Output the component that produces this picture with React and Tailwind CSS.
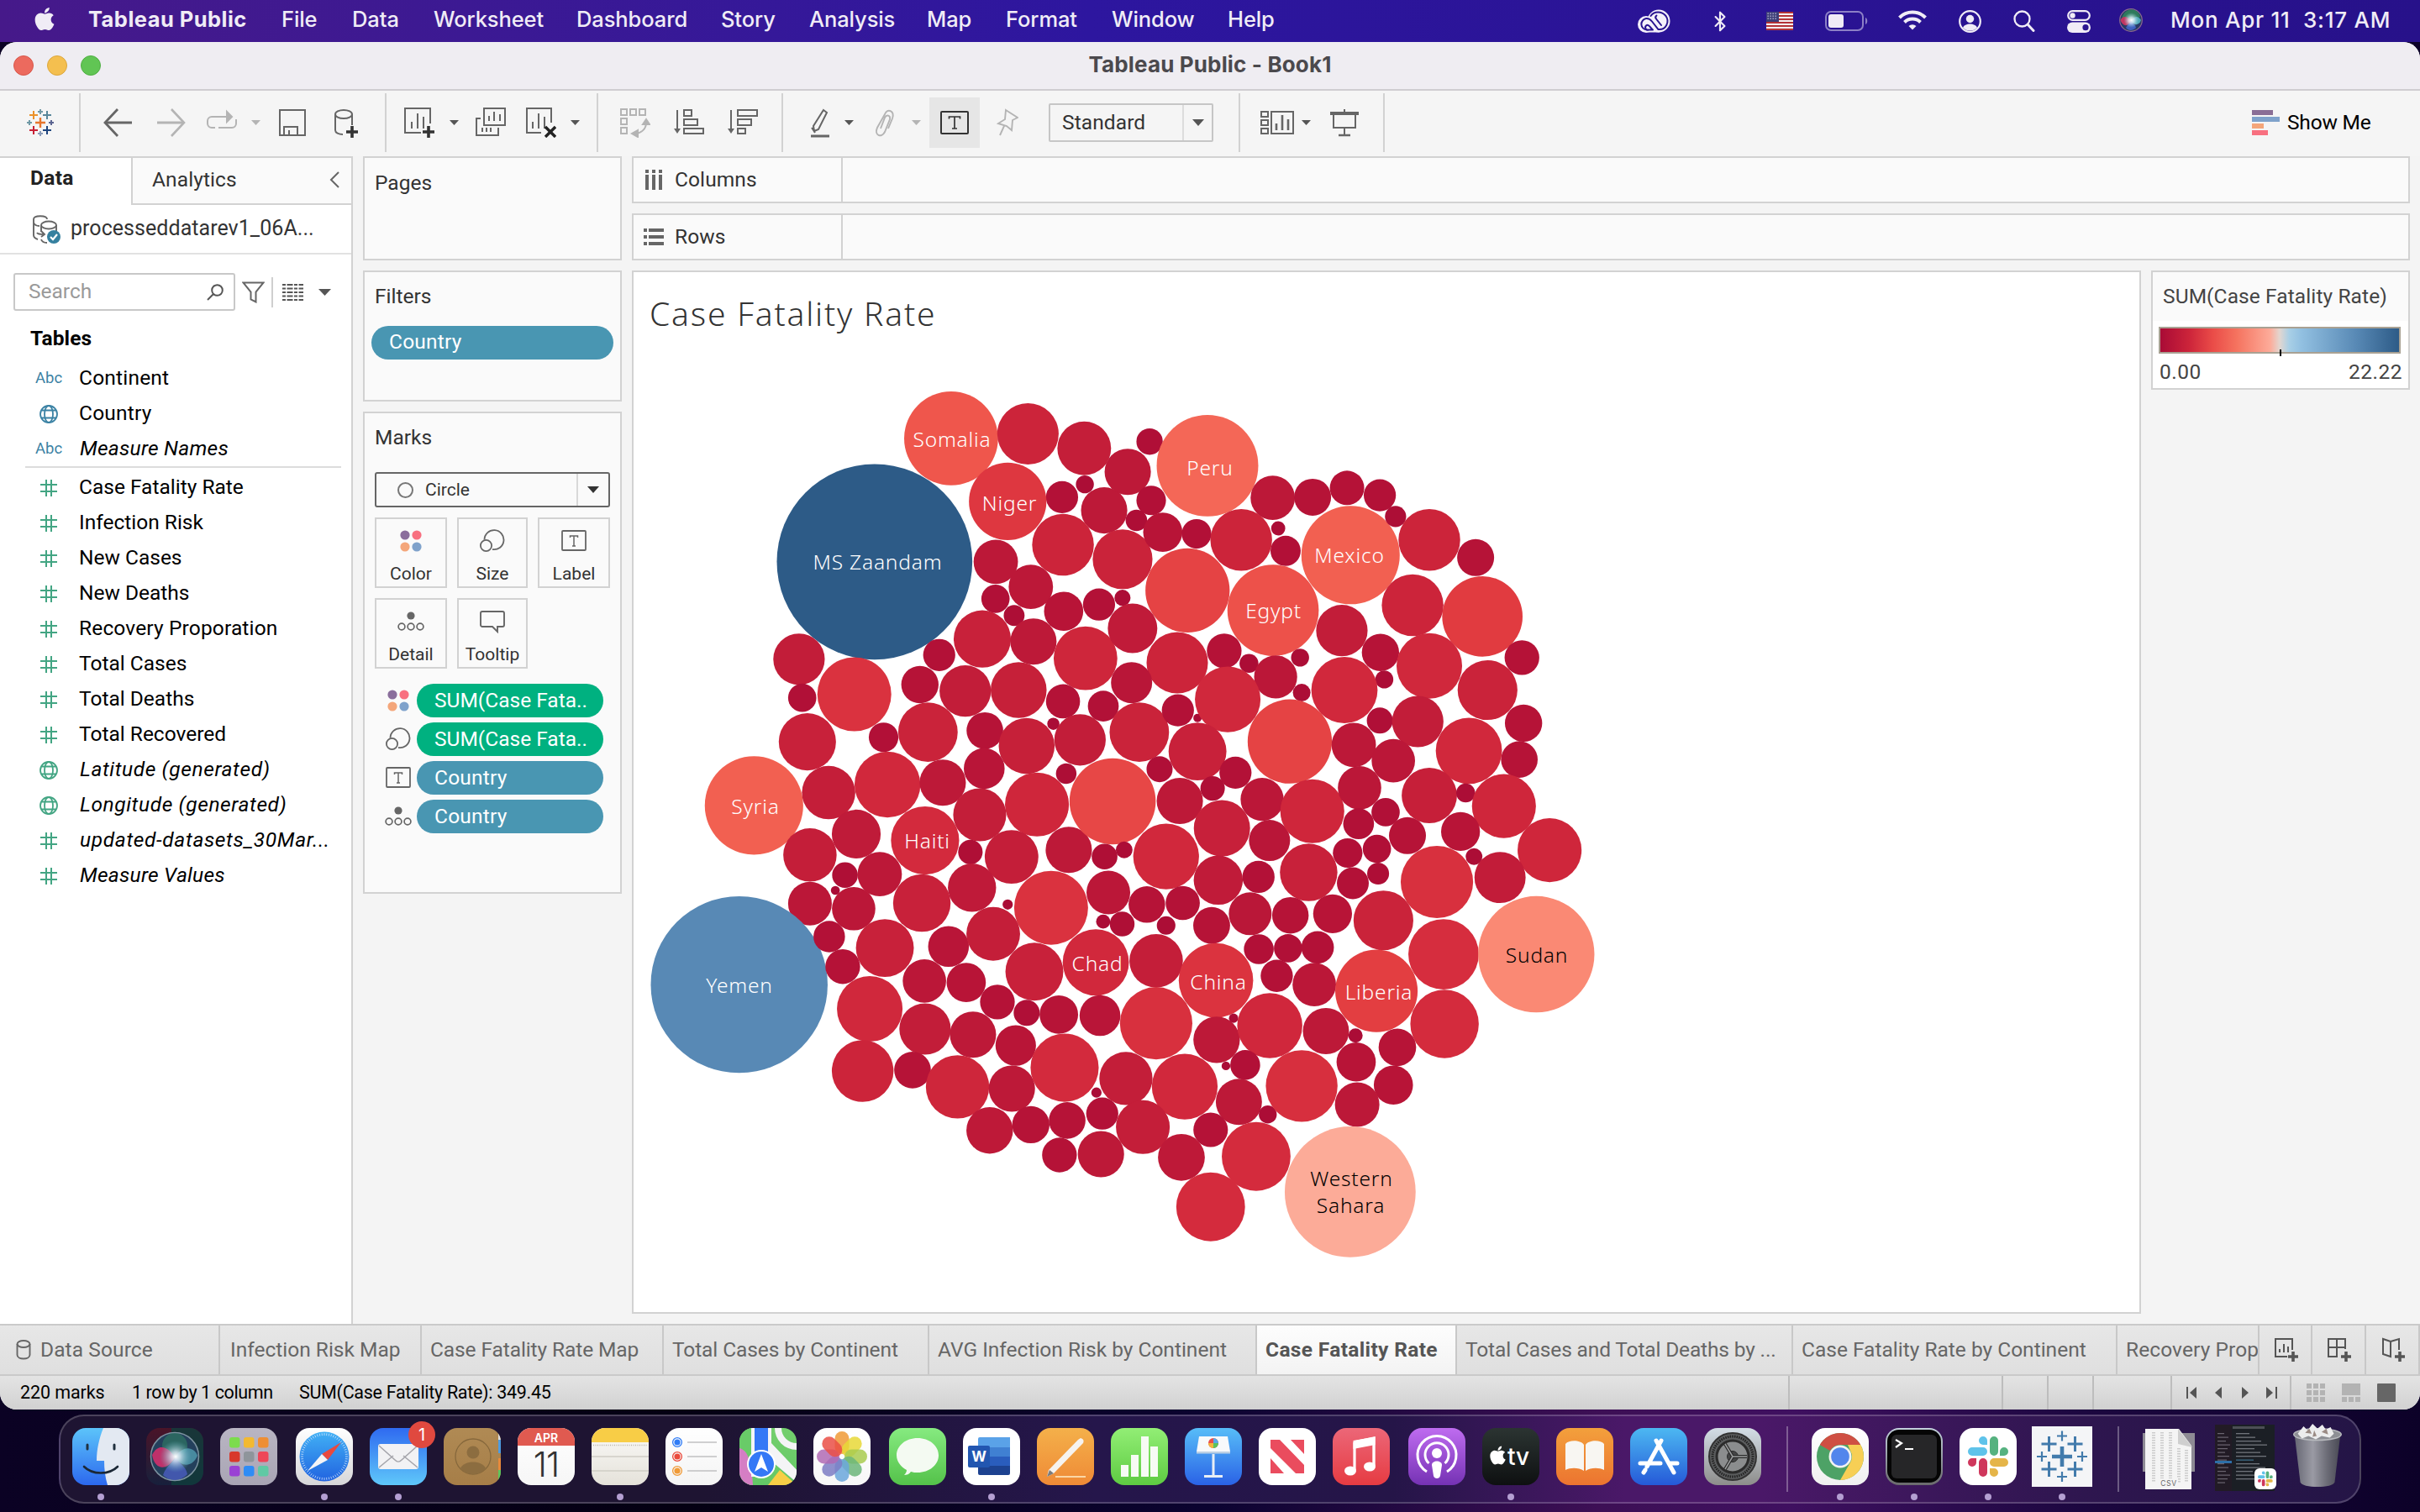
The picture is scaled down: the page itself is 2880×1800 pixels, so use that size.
import React from 'react';
import { FaApple } from 'react-icons/fa';
import { Bluetooth } from 'lucide-react';

const UI = "font-['Roboto','Liberation_Sans',sans-serif]";
const SYS = "font-['Inter','Liberation_Sans',sans-serif]";

/* ---------- bubble data: [x, y, radius] in the local units of each block ---------- */
const BLOCKS = [
  {
    ox: 750, oy: 440, sx: 2.6133, sy: 2.6133,
    marks: [
      [998, 214, 146], [1237, 200, 95.5], [1412, 245, 83.5], [1414, 357, 28], [1343, 397, 50], [1174, 410, 120.5],
      [1474, 438, 72], [760, 598, 304], [1346, 545, 96], [1137, 598, 69], [1246, 676, 69], [1136, 713, 44],
      [1348, 752, 61], [1458, 731, 50], [1531, 710, 25], [1194, 765, 32.5], [1095, 838, 89], [1254, 846, 72],
      [1416, 898, 99], [525, 901, 80], [961, 888, 50], [901, 980, 58], [697, 1010, 115], [1042, 1000, 80],
      [1208, 997, 87], [535, 1021, 44], [1346, 1032, 53], [551, 1158, 89], [788, 1144, 46], [926, 1128, 92.5],
      [1103, 1123, 57], [1316, 1102, 19], [1233, 1171, 87], [1399, 1152, 80], [1101, 1241, 63.5], [385, 1356, 153],
      [617, 1316, 83], [800, 1291, 102.5], [972, 1285, 72], [1356, 1257, 32], [1265, 1353, 99.5], [1087, 1385, 82.5],
      [703, 1445, 76], [917, 1465, 106], [559, 1510, 83], [1058, 1501, 38], [1186, 1516, 83.5], [1364, 1494, 72],
    ],
  },
  {
    ox: 1300, oy: 440, sx: 2.6133, sy: 2.6133,
    marks: [
      [110, 318, 72], [178, 224, 41], [358, 299, 158], [183, 407, 46], [137, 469, 33.5], [94, 590, 93],
      [219, 506, 61], [324, 511, 46], [463, 530, 96], [561, 399, 69], [685, 397, 57.5], [792, 368, 53.5],
      [894, 391, 50], [578, 494, 22], [601, 564, 47], [803, 577, 153], [943, 457, 33], [1048, 530, 96],
      [1192, 585, 57.5], [296, 687, 131], [562, 749, 142], [125, 805, 77], [264, 912, 95.5], [410, 875, 54],
      [487, 914, 29.5], [570, 956, 67], [646, 896, 28], [651, 1005, 27.5], [776, 812, 80], [896, 880, 58],
      [996, 733, 96], [1213, 768, 125], [1048, 922, 102], [908, 964, 28], [784, 997, 103], [1336, 896, 54],
      [1229, 997, 93], [122, 974, 64], [34, 1047, 48], [146, 1128, 92.5], [266, 1060, 50], [327, 1084, 13],
      [421, 1026, 102], [327, 1188, 90], [614, 1157, 131], [894, 1092, 40.5], [1012, 1095, 80], [1341, 1100, 58],
      [1328, 1213, 57], [1171, 1186, 103], [209, 1243, 40.5], [445, 1254, 50], [374, 1303, 38], [272, 1342, 72],
      [403, 1427, 87.5], [528, 1337, 67], [551, 1465, 64], [684, 1374, 99.5], [813, 1168, 69], [936, 1217, 67.5],
      [831, 1301, 67.5], [828, 1413, 48], [912, 1377, 44], [1048, 1325, 86], [1161, 1317, 29.5], [1280, 1358, 99.5],
      [1145, 1437, 60.5], [980, 1450, 57.5], [794, 1504, 46], [885, 1491, 44], [1187, 1515, 26], [1422, 1495, 99.5],
      [63, 1343, 134], [38, 1515, 40], [99, 1494, 26],
    ],
  },
  {
    ox: 750, oy: 980, sx: 2.6133, sy: 2.8,
    marks: [
      [668, 173, 40], [776, 170, 69], [638, 224, 14], [559, 268, 68], [695, 285, 67.5], [907, 266, 89.5],
      [1063, 215, 75], [1174, 271, 16], [1309, 282, 115], [1487, 231, 68], [1471, 328, 22], [1530, 336, 38.5],
      [339, 538, 275], [619, 378, 49], [792, 416, 90], [661, 478, 54], [990, 411, 63.5], [1129, 369, 83.5],
      [1448, 464, 103], [1257, 495, 90], [915, 526, 67.5], [1045, 531, 61], [745, 619, 102], [917, 686, 80],
      [1142, 596, 54], [1233, 632, 40.5], [1333, 638, 60], [1461, 641, 63.5], [1066, 705, 72], [1199, 741, 63],
      [723, 826, 96], [878, 823, 57], [1018, 879, 98.5], [1187, 885, 72], [1351, 815, 106], [1450, 898, 16],
      [1468, 968, 50], [1118, 1024, 72.5], [1246, 1005, 58], [1359, 991, 57], [1335, 1106, 54], [1464, 1103, 72],
    ],
  },
  {
    ox: 1300, oy: 980, sx: 2.529, sy: 2.8,
    marks: [
      [222, 111, 99], [379, 190, 74], [500, 179, 48.5], [651, 164, 86.5], [164, 271, 55], [272, 266, 51.5],
      [222, 341, 28], [359, 341, 55.5], [475, 302, 64.5], [596, 307, 55], [723, 302, 58.5], [784, 200, 48],
      [860, 168, 33], [1037, 196, 109], [1227, 181, 77], [876, 324, 90], [1057, 437, 106], [1336, 437, 175],
      [192, 459, 80.5], [372, 524, 112], [501, 420, 45], [589, 417, 42.5], [678, 414, 49], [555, 509, 48.5],
      [668, 538, 65.5], [855, 559, 124], [1060, 669, 103], [192, 667, 109], [374, 722, 70], [425, 650, 14],
      [534, 675, 98], [703, 693, 69.5], [792, 708, 21.5], [794, 796, 59], [918, 747, 56.5], [906, 873, 59],
      [797, 938, 67], [402, 809, 13], [460, 806, 45], [101, 851, 80], [278, 878, 99], [441, 929, 69.5],
      [528, 971, 27], [630, 876, 108], [152, 1013, 81], [356, 1022, 52], [268, 1114, 70.5], [493, 1111, 103.5],
      [356, 1279, 103.5], [776, 1229, 197],
    ],
  },
];

const STOPS = [
  [0, 169, 11, 54], [0.035, 182, 19, 55], [0.067, 193, 28, 57], [0.0985, 204, 36, 58], [0.121, 211, 42, 61],
  [0.143, 218, 50, 63], [0.178, 227, 62, 65], [0.19, 230, 69, 69], [0.229, 239, 85, 76], [0.253, 242, 96, 81],
  [0.268, 244, 102, 86], [0.352, 250, 136, 115], [0.45, 252, 171, 153], [0.5, 226, 214, 208], [0.56, 146, 192, 225],
  [0.82, 88, 137, 181], [1, 45, 91, 135],
];

function tone(t) {
  for (let i = 1; i < STOPS.length; i += 1) {
    if (t <= STOPS[i][0] || i === STOPS.length - 1) {
      const a = STOPS[i - 1];
      const b = STOPS[i];
      const k = Math.min(1, (t - a[0]) / (b[0] - a[0]));
      return `rgb(${[1, 2, 3].map((c) => Math.round(a[c] + (b[c] - a[c]) * k)).join(',')})`;
    }
  }
  return 'rgb(169,11,54)';
}

const BUBBLES = BLOCKS.flatMap((b) =>
  b.marks.map(([x, y, r]) => {
    const radius = r / b.sx;
    return { x: b.ox + x / b.sx, y: b.oy + y / b.sy, r: radius, fill: tone((radius / 116.3) ** 2) };
  })
);

const LABELS = [
  ['Somalia', 1133, 532], ['Niger', 1201.5, 607.6], ['MS Zaandam', 1044.5, 678], ['Syria', 899, 968.5],
  ['Haiti', 1103.5, 1010], ['Peru', 1440, 566], ['Mexico', 1606, 670], ['Egypt', 1515.5, 736],
  ['Yemen', 880, 1182], ['Chad', 1306, 1156], ['China', 1450, 1178], ['Liberia', 1641, 1190],
  ['Sudan', 1829, 1146, true], ['Western', 1608.5, 1412, true], ['Sahara', 1607.5, 1444, true],
];

/* ---------- menu bar ---------- */
const MENUS = [
  ['File', 'w-[84px]'], ['Data', 'w-[97px]'], ['Worksheet', 'w-[170px]'], ['Dashboard', 'w-[172px]'],
  ['Story', 'w-[105px]'], ['Analysis', 'w-[140px]'], ['Map', 'w-[94px]'], ['Format', 'w-[126px]'],
  ['Window', 'w-[138px]'], ['Help', 'w-[80px]'],
];

function MenuBar() {
  return (
    <div className={`flex h-[50px] shrink-0 items-center bg-linear-to-r from-[#46198a] via-[#2d169f] via-45% to-[#27118a] text-[25.5px] font-medium tracking-[-0.1px] text-[#f0ecf6] ${SYS}`}>
      <FaApple className="mb-[5px] ml-[38px] h-[31px] w-[30px]" />
      <div className="mb-[3px] ml-[37px] w-[230px] font-bold tracking-[0.45px] whitespace-nowrap">Tableau Public</div>
      {MENUS.map(([m, w]) => (
        <div key={m} className={`mb-[3px] whitespace-nowrap ${w}`}>{m}</div>
      ))}
      <svg className="ml-auto h-[28px] w-[40px]" viewBox="0 0 40 28">
        <g fill="#f4f0fa"><circle cx="11" cy="18" r="10" /><circle cx="26" cy="14" r="13.500" /><path d="M11 18h16v9.500H11z" /></g>
        <g fill="none" stroke="#28138f" strokeWidth="2" strokeLinecap="round">
          <path d="M12 24.500a6.800 6.800 0 0 1-1-13.500c3-.5 5 1 7 3.500l7.500 9.500c9 1 14-9 9-16-5-6-14-6-18 0" />
          <path d="M19 24.500h-5a3 3 0 0 1-3-5c1.500-1.200 3-.6 4.200.9l3.600 4.100" />
          <path d="m29 19-6-7.500c-1-1.200-.8-3 .4-4" />
        </g>
      </svg>
      <Bluetooth className="ml-[46px] h-[29px] w-[26px]" strokeWidth={2} />
      <svg className="ml-[42px] h-[22px] w-[32px]" viewBox="0 0 32 22">
        <rect width="32" height="22" fill="#f3eef0" />
        {[0, 2, 4, 6, 8, 10].map((i) => <rect key={i} y={i * 2} width="32" height="1.9" fill="#b02a2e" />)}
        <rect width="15" height="12" fill="#3d3f78" />
        {[1.5, 4.5, 7.5].map((y) => [1.5, 4.5, 7.5, 10.5].map((x) => <rect key={`${x}-${y}`} x={x} y={y} width="1.3" height="1.3" fill="#cfcbe4" />))}
      </svg>
      <svg className="ml-[38px] h-[24px] w-[52px]" viewBox="0 0 52 24">
        <rect x="1" y="1" width="44" height="22" rx="6" fill="none" stroke="#8c80c6" strokeWidth="2" />
        <rect x="4" y="4" width="18" height="16" rx="3" fill="#f0ecf6" />
        <path d="M48 8c3 1 3 7 0 8z" fill="#8c80c6" />
      </svg>
      <svg className="mb-[3px] ml-[35px] h-[24px] w-[34px]" viewBox="0 0 34 24" fill="none" stroke="#f0ecf6" strokeWidth="4">
        <path d="M1.500 9a22 22 0 0 1 31 0" />
        <path d="M7.500 14.500a13.500 13.500 0 0 1 19 0" />
        <path d="M12.500 19a6.500 6.500 0 0 1 9 0L17 23.500z" fill="#f0ecf6" stroke="none" />
      </svg>
      <svg className="ml-[38px] h-[27px] w-[27px]" viewBox="0 0 27 27">
        <circle cx="13.500" cy="13.500" r="12.300" fill="none" stroke="#f0ecf6" strokeWidth="2.200" />
        <circle cx="13.500" cy="10.500" r="4.700" fill="#f0ecf6" />
        <path d="M5 21c2-6 15-6 17 0a12 12 0 0 1-17 0" fill="#f0ecf6" />
      </svg>
      <svg className="ml-[38px] h-[26px] w-[26px]" viewBox="0 0 26 26" fill="none" stroke="#f0ecf6" strokeLinecap="round">
        <circle cx="10.500" cy="10.500" r="9" strokeWidth="2.300" />
        <path d="m17.500 17.500 6.500 7" strokeWidth="3" />
      </svg>
      <svg className="ml-[38px] h-[27px] w-[28px]" viewBox="0 0 28 27">
        <rect x="1.200" y="1.200" width="25.600" height="10.600" rx="5.300" fill="none" stroke="#f0ecf6" strokeWidth="2.200" />
        <circle cx="6.500" cy="6.500" r="3.200" fill="#f0ecf6" />
        <rect y="14.500" width="28" height="12.500" rx="6.250" fill="#f0ecf6" />
        <circle cx="22" cy="20.700" r="3.600" fill="#2b1690" />
      </svg>
      <svg className="mb-[2px] ml-[34px] h-[28px] w-[28px]" viewBox="0 0 28 28">
        <radialGradient id="ms"><stop offset="0" stopColor="#fff" /><stop offset=".4" stopColor="#e3f2fa" stopOpacity=".75" /><stop offset="1" stopColor="#8fd0d8" stopOpacity="0" /></radialGradient>
        <circle cx="14" cy="14" r="13.300" fill="#273a66" stroke="#8d6a8f" strokeWidth="1.200" />
        <path d="M3 12C5 4 10 1.500 15 1.500S24 5 25 10c-6 6-16 6-22 2z" fill="#2f7a5c" />
        <path d="M1.500 14C4 8 10 9 14 15c-3 7-10 7-12.500-1z" fill="#c23560" /><path d="M14 15c4-7 9-6 12-1-2 6-8 7-12 1z" fill="#4fa8b8" />
        <path d="M8 23c2-4 5-5 6-8 2 3 5 4 6 8-4 4-9 4-12 0z" fill="#3f60c0" />
        <circle cx="14.500" cy="14" r="9" fill="url(#ms)" />
      </svg>
      <div className="mr-[39px] mb-[3px] ml-[33px] w-[258px] text-[26px] tracking-[0.75px] whitespace-pre">Mon Apr 11&nbsp; 3:17 AM</div>
    </div>
  );
}

/* ---------- toolbar ---------- */
const D = '#666666';
const L = '#b4b4b4';

function Ico({ w, cls, children, color = D }) {
  return (
    <svg className={`h-[36px] shrink-0 ${cls}`} viewBox={`0 0 ${w} 36`} fill="none" stroke={color} strokeWidth="2">
      {children}
    </svg>
  );
}
const Sep = ({ cls }) => <div className={`h-[70px] w-[2px] shrink-0 bg-[#d2d2d2] ${cls}`} />;
const Caret = ({ cls, color = '#555' }) => (
  <svg className={`h-[6px] w-[11px] shrink-0 ${cls}`} viewBox="0 0 11 6"><path d="M0 0h11l-5.500 6z" fill={color} /></svg>
);

function plus(cx, cy, s) {
  return `M${cx - s} ${cy}h${2 * s}M${cx} ${cy - s}v${2 * s}`;
}

function Toolbar() {
  return (
    <div className="flex h-[78px] shrink-0 items-center bg-[#f5f5f5] pb-[2px]">
      <Ico w={32} cls="ml-[32px] w-[32px]">
        <path d={plus(16, 18, 6)} stroke="#e8762d" strokeWidth="2.400" />
        <path d={plus(8, 9, 5)} stroke="#eb9129" />
        <path d={plus(24, 9, 5)} stroke="#59879b" />
        <path d={plus(8, 27, 5)} stroke="#c72035" />
        <path d={plus(24, 27, 5)} stroke="#1f457e" />
        <path d={plus(16, 5, 3)} stroke="#7199a6" />
        <path d={plus(16, 31, 3)} stroke="#8a9bb8" />
        <path d={plus(3, 18, 3)} stroke="#7099a6" />
        <path d={plus(29, 18, 3)} stroke="#5b6591" />
      </Ico>
      <Sep cls="ml-[30px]" />
      <Ico w={34} cls="ml-[27px] w-[34px]"><path d="M17 2 2 18l15 16" strokeWidth="2.800" /><path d="M2 18h32" strokeWidth="3.200" /></Ico>
      <Ico w={34} cls="ml-[30px] w-[34px]" color={L}><path d="M17 2l15 16-15 16" strokeWidth="2.600" /><path d="M0 18h32" strokeWidth="3" /></Ico>
      <Ico w={36} cls="ml-[25px] w-[36px]" color={L}>
        <path d="M10 24H6a5 5 0 0 1-5-5v-3a5 5 0 0 1 5-5h18M14 24h16a5 5 0 0 0 5-5v-5" />
        <path d="M24 5v12l6-6z" fill={L} />
      </Ico>
      <Caret cls="ml-[17px]" color={L} />
      <Ico w={32} cls="ml-[22px] w-[32px]"><path d="M1 3h30v30H1zM6 33V23h16v10M12 33v-6" /></Ico>
      <Ico w={28} cls="ml-[34px] w-[28px]">
        <ellipse cx="11" cy="8" rx="10" ry="5" /><path d="M1 8v19c0 3 4 5 9 5M21 8v13" />
        <path d={plus(21, 29, 7)} stroke="#333" strokeWidth="3.600" />
      </Ico>
      <Sep cls="ml-[32px]" />
      <Ico w={36} cls="ml-[21px] w-[36px]">
        <path d="M20 30H1V1h30v18M9 25v-8M16 25V7M23 25V11" /><path d={plus(29, 29, 7)} stroke="#333" strokeWidth="3.600" />
      </Ico>
      <Caret cls="ml-[18px]" />
      <Ico w={36} cls="ml-[20px] w-[36px]">
        <path d="M10 1h25v20H10zM16 16v-6M22 16V5M29 16V8M6 13H1v20h26v-9M8 29v-5M13 29v-5M18 29v-5" />
      </Ico>
      <Ico w={36} cls="ml-[24px] w-[36px]">
        <path d="M18 30H1V1h29v17M8 25v-8M15 25V7M22 25V11" /><path d="m23 23 12 12M35 23 23 35" stroke="#222" strokeWidth="3.400" />
      </Ico>
      <Caret cls="ml-[17px]" />
      <Sep cls="ml-[20px]" />
      <Ico w={36} cls="ml-[26px] w-[36px]" color={L}>
        <path d="M1 2h7v7H1zM12 2h7v7h-7zM23 2h7v7h-7zM1 13h7v7H1zM1 24h7v7H1zM31 18c0 8-6 12-12 13" />
        <path d="m27 20 4-6 4 6zM21 27l-7 4 7 4z" fill={L} />
      </Ico>
      <Ico w={36} cls="ml-[28px] w-[36px]">
        <path d="M4 3v24M12 3h9v7h-9zM12 14h16v7H12zM12 25h23v6H12z" /><path d="M0 25h8l-4 6z" fill={D} stroke="none" />
      </Ico>
      <Ico w={36} cls="ml-[28px] w-[36px]">
        <path d="M4 3v24M12 3h23v7H12zM12 14h16v7H12zM12 25h9v6h-9z" /><path d="M0 25h8l-4 6z" fill={D} stroke="none" />
      </Ico>
      <Sep cls="ml-[28px]" />
      <Ico w={22} cls="ml-[33px] w-[22px]">
        <path d="m15 3 4 3L9 26l-5 2-1-6zM1 24l4 6" /><path d="M0 34h22" strokeWidth="3" />
      </Ico>
      <Caret cls="ml-[18px]" />
      <Ico w={25} cls="ml-[25px] w-[25px]" color={L}>
        <path d="M16 25l5-12c3-9-6-13-9-5L3 24c-4 9 5 13 9 5l6-15c1-5-4-6-6-2L7 25" strokeWidth="1.900" />
      </Ico>
      <Caret cls="ml-[19px]" color={L} />
      <div className="ml-[10px] flex h-[60px] w-[60px] shrink-0 items-center justify-center bg-[#e6e6e6]">
        <svg className="h-[28px] w-[34px]" viewBox="0 0 34 28" fill="none" stroke="#333" strokeWidth="2">
          <rect x="1" y="1" width="32" height="26" rx="1" /><path d="M10.500 9.500V7h13v2.500M17 7v14M14 21h6" strokeWidth="1.700" />
        </svg>
      </div>
      <Ico w={26} cls="ml-[20px] w-[26px]" color={L}>
        <path d="m11 3 14 9-6 3-1 12-6-5-10-3 8-5zM9 22 4 33" strokeWidth="1.900" />
      </Ico>
      <div className="ml-[36px] flex h-[46px] w-[196px] shrink-0 items-center rounded-[2px] border-2 border-[#c6c6c6]">
        <span className={`w-[157px] pl-[14px] text-[24.500px] tracking-[0.1px] text-[#333] ${UI}`}>Standard</span>
        <div className="flex h-full w-[35px] items-center justify-center border-l-2 border-[#dcdcdc]">
          <svg className="h-[8px] w-[14px]" viewBox="0 0 14 8"><path d="M0 0h14L7 8z" fill="#555" /></svg>
        </div>
      </div>
      <Sep cls="ml-[30px]" />
      <Ico w={40} cls="ml-[24px] w-[40px]">
        <path d="M1 5h8v6H1zM1 15h8v6H1zM1 25h8v6H1zM13 5h26v26H13z" /><path d="M19 27v-8M26 27V9M33 27V14" strokeWidth="2.600" />
      </Ico>
      <Caret cls="ml-[9px]" />
      <Ico w={34} cls="ml-[23px] w-[34px]">
        <path d="M0 7h34" strokeWidth="4" /><path d="M4 9v15h26V9M17 24v9M17 2v4" /><path d="M10 33h14" strokeWidth="2.400" />
      </Ico>
      <Sep cls="ml-[29px]" />
      <div className="mr-[56px] ml-auto flex items-center gap-[9px]">
        <div className="flex w-[33px] flex-col gap-[2px]">
          <div className="h-[6px] w-[25px] bg-[#8a6e96]" />
          <div className="h-[6px] w-[33px] bg-[#7fa2cb]" />
          <div className="h-[6px] w-[14px] bg-[#f4a67a]" />
          <div className="h-[6px] w-[19px] bg-[#f87080]" />
        </div>
        <span className={`w-[102px] text-[24.500px] tracking-[-0.2px] whitespace-nowrap text-black ${UI}`}>Show Me</span>
      </div>
    </div>
  );
}

/* ---------- data pane ---------- */
const Hash = () => (
  <svg className="h-[20px] w-[20px]" viewBox="0 0 20 20" fill="none" stroke="#43a583" strokeWidth="2"><path d="M7 0v20M13 0v20M0 6h20M0 14h20" /></svg>
);
const Globe = ({ c }) => (
  <svg className="h-[22px] w-[22px]" viewBox="0 0 22 22" fill="none" stroke={c} strokeWidth="1.800">
    <circle cx="11" cy="11" r="10" /><ellipse cx="11" cy="11" rx="5" ry="10" /><path d="M2.500 6.500h17M2.500 15.500h17" />
  </svg>
);
const Abc = () => <span className="text-[18.500px] text-[#3b82a4]">Abc</span>;

const DIMS = [['Continent', 'abc', 'tracking-[0.2px]'], ['Country', 'geo', 'tracking-[0.2px]'], ['Measure Names', 'abc', 'italic pl-px tracking-[0.25px]']];
const MEAS = [
  ['Case Fatality Rate', 'num', ''], ['Infection Risk', 'num', ''], ['New Cases', 'num', ''], ['New Deaths', 'num', ''],
  ['Recovery Proporation', 'num', 'tracking-[0.15px]'], ['Total Cases', 'num', ''], ['Total Deaths', 'num', ''], ['Total Recovered', 'num', ''],
  ['Latitude (generated)', 'ggeo', 'italic pl-px tracking-[0.6px]'], ['Longitude (generated)', 'ggeo', 'italic pl-px tracking-[0.6px]'],
  ['updated-datasets_30Mar...', 'num', 'italic pl-px tracking-[0.65px]'], ['Measure Values', 'num', 'italic pl-px tracking-[0.25px]'],
];

function Field({ row: [name, kind, cls] }) {
  return (
    <div className="flex h-[42px] items-center">
      <div className="ml-[38px] flex w-[40px] items-center justify-center pt-[2px]">
        {kind === 'abc' && <Abc />}
        {kind === 'geo' && <Globe c="#3b82a4" />}
        {kind === 'ggeo' && <Globe c="#43a583" />}
        {kind === 'num' && <Hash />}
      </div>
      <span className={`ml-[16px] text-[24.500px] whitespace-nowrap text-black ${cls}`}>{name}</span>
    </div>
  );
}

function DataPane() {
  return (
    <div className={`flex h-full w-[420px] shrink-0 flex-col border-t-2 border-r-2 border-[#d2d2d2] bg-white ${UI}`}>
      <div className="flex h-[56px] shrink-0">
        <div className="w-[156px] pt-[6px] pl-[36px] text-[24.500px] font-bold tracking-[0.3px] text-[#222]">Data</div>
        <div className="flex flex-1 items-center border-b-2 border-l-2 border-[#d2d2d2] bg-[#fafafa] pr-[14px] pb-[2px] pl-[23px] text-[24.500px] tracking-[0.1px] text-[#333]">
          Analytics
          <svg className="ml-auto h-[20px] w-[12px]" viewBox="0 0 12 20" fill="none" stroke="#666" strokeWidth="2"><path d="M11 1 2 10l9 9" /></svg>
        </div>
      </div>
      <div className="flex h-[59px] shrink-0 items-center border-b-2 border-[#e2e2e2] pl-[39px] text-[25px] tracking-[0.05px] text-[#333]">
        <svg className="h-[34px] w-[34px]" viewBox="0 0 34 34" fill="none" stroke="#666" strokeWidth="1.900">
          <path d="M1 5c0-5 16-5 16 0M1 5v19c0 3 2 4 5 5M1 9c1 3 4 4 7 4M5 21c1 2 4 2 8 2M10 26l4-3-4-4" />
          <ellipse cx="19" cy="12" rx="9" ry="4.500" /><path d="M10 12v8M28 12v7M10 29c1 3 4 4 7 4" />
          <circle cx="25" cy="26" r="8" fill="#35809f" stroke="none" /><path d="m21 26 3 3 5-6" stroke="#fff" strokeWidth="2.200" />
        </svg>
        <span className="mb-[2px] ml-[11px] whitespace-nowrap">processeddatarev1_06A...</span>
      </div>
      <div className="mt-[22px] flex h-[45px] shrink-0 items-center pl-[16px]">
        <div className="flex h-[45px] w-[264px] items-center rounded-[3px] border-2 border-[#c8c8c8] pr-[12px] pl-[16px] text-[24.500px] text-[#9a9a9a]">
          Search
          <svg className="ml-auto h-[20px] w-[20px]" viewBox="0 0 20 20" fill="none" stroke="#555" strokeWidth="2"><circle cx="12.500" cy="7.500" r="6.300" /><path d="m8 12-7 7" /></svg>
        </div>
        <svg className="ml-[8px] h-[26px] w-[27px]" viewBox="0 0 27 26" fill="none" stroke="#666" strokeWidth="2"><path d="M1.500 1.500h24l-9 11v12l-6-3v-9z" /></svg>
        <div className="ml-[8px] h-[36px] w-[2px] bg-[#cfcfcf]" />
        <svg className="ml-[11px] h-[20px] w-[25px]" viewBox="0 0 25 20" stroke="#555" strokeWidth="2"><path d="M0 1h25M0 5.500h25M0 10h25M0 14.500h25M0 19h25" strokeDasharray="4 1.500 7 1.500 4 1.500 6" /></svg>
        <svg className="ml-[18px] h-[8px] w-[15px]" viewBox="0 0 15 8"><path d="M0 0h15L7.500 8z" fill="#555" /></svg>
      </div>
      <div className="mt-[18px] flex h-[30px] items-center pl-[36px] text-[24.500px] font-bold tracking-[0.1px] text-black">Tables</div>
      <div className="mt-[11px]">{DIMS.map((f) => <Field key={f[0]} row={f} />)}</div>
      <div className="mr-[12px] ml-[30px] h-[2px] bg-[#dcdcdc]" />
      <div className="mt-[2px]">{MEAS.map((f) => <Field key={f[0]} row={f} />)}</div>
    </div>
  );
}

/* ---------- cards ---------- */
const ColorDots = () => (
  <svg className="h-[28px] w-[28px]" viewBox="0 0 28 28">
    <circle cx="7" cy="7" r="5.600" fill="#8a6e9c" /><circle cx="21" cy="7" r="5.600" fill="#f87080" />
    <circle cx="7" cy="21" r="5.600" fill="#f4a67a" /><circle cx="21" cy="21" r="5.600" fill="#7fa2cb" />
  </svg>
);
const SizeIcon = () => (
  <svg className="h-[28px] w-[30px]" viewBox="0 0 30 28" fill="none" stroke="#666" strokeWidth="1.800">
    <path d="M5.500 12.500A11.500 11.500 0 1 1 15 24" /><circle cx="7.500" cy="19.500" r="6.600" />
  </svg>
);
const LabelIcon = () => (
  <svg className="h-[26px] w-[30px]" viewBox="0 0 30 26" fill="none" stroke="#666" strokeWidth="1.800">
    <rect x="1" y="1" width="28" height="23" rx="1" /><path d="M10.500 9V7h9v2M15 7v12M13 19h4" strokeWidth="1.500" />
  </svg>
);
const DetailIcon = () => (
  <svg className="h-[24px] w-[32px]" viewBox="0 0 32 24" fill="none" stroke="#666" strokeWidth="1.700">
    <circle cx="16" cy="5" r="4.600" fill="#666" stroke="none" /><circle cx="5" cy="18" r="3.900" /><circle cx="16" cy="18" r="3.900" /><circle cx="27" cy="18" r="3.900" />
  </svg>
);
const TooltipIcon = () => (
  <svg className="h-[28px] w-[30px]" viewBox="0 0 30 28" fill="none" stroke="#666" strokeWidth="1.900"><path d="M3 2h24a2 2 0 0 1 2 2v14a2 2 0 0 1-2 2h-6v6l-6-6H3a2 2 0 0 1-2-2V4a2 2 0 0 1 2-2z" /></svg>
);

function MarkButton({ icon, label, cls }) {
  return (
    <div className={`flex h-[84px] flex-col items-center border-2 border-[#d2d2d2] bg-[#fafafa] ${cls}`}>
      <div className="mt-[10px] flex h-[32px] items-center">{icon}</div>
      <div className="mt-[10px] text-[21px] leading-[26px] text-[#333]">{label}</div>
    </div>
  );
}

function Encoding({ icon, label, green }) {
  return (
    <div className="flex h-[40px] items-center">
      <div className="ml-[8px] flex w-[40px] justify-center">{icon}</div>
      <div className={`ml-[2px] flex h-[40px] w-[222px] items-center rounded-full pl-[21px] text-[24.500px] whitespace-nowrap text-white ${green ? 'bg-[#00b180]' : 'bg-[#4996b2] tracking-[0.2px]'}`}>{label}</div>
    </div>
  );
}

const CARD = 'border-2 border-[#d2d2d2] bg-[#fafafa] text-[24.500px] text-[#333]';

function Cards() {
  return (
    <div className={`ml-[12px] flex w-[308px] shrink-0 flex-col gap-[12px] ${UI}`}>
      <div className={`h-[124px] pt-[12px] pl-[12px] ${CARD}`}>Pages</div>
      <div className={`h-[156px] pt-[11px] pl-[8px] ${CARD}`}>
        <div className="pl-[4px]">Filters</div>
        <div className="mt-[16px] flex h-[40px] w-[288px] items-center rounded-full bg-[#4996b2] pl-[21px] tracking-[0.2px] text-white">Country</div>
      </div>
      <div className={`h-[574px] pt-[11px] pl-[12px] ${CARD}`}>
        <div className="h-[38px]">Marks</div>
        <div className="mt-[21px] flex h-[42px] w-[280px] items-center rounded-[3px] border-2 border-[#666] text-[21px]">
          <div className="ml-[25px] h-[19px] w-[19px] rounded-full border-2 border-[#777]" />
          <span className="mt-px ml-[14px]">Circle</span>
          <div className="ml-auto flex h-full w-[38px] items-center justify-center border-l-2 border-[#d8d8d8]">
            <svg className="h-[8px] w-[14px]" viewBox="0 0 14 8"><path d="M0 0h14L7 8z" fill="#333" /></svg>
          </div>
        </div>
        <div className="mt-[12px] flex flex-wrap gap-x-[12px] gap-y-[12px]">
          <MarkButton cls="w-[86px]" icon={<ColorDots />} label="Color" />
          <MarkButton cls="w-[84px]" icon={<SizeIcon />} label="Size" />
          <MarkButton cls="w-[86px]" icon={<LabelIcon />} label="Label" />
          <MarkButton cls="w-[86px]" icon={<DetailIcon />} label="Detail" />
          <MarkButton cls="w-[84px]" icon={<TooltipIcon />} label="Tooltip" />
        </div>
        <div className="mt-[18px] flex flex-col gap-[6px]">
          <Encoding icon={<ColorDots />} label="SUM(Case Fata.." green />
          <Encoding icon={<SizeIcon />} label="SUM(Case Fata.." green />
          <Encoding icon={<LabelIcon />} label="Country" />
          <Encoding icon={<DetailIcon />} label="Country" />
        </div>
      </div>
    </div>
  );
}

/* ---------- shelves, view and legend ---------- */
function Shelf({ label, icon }) {
  return (
    <div className="flex h-[56px] shrink-0 border-2 border-[#d2d2d2] bg-[#fafafa]">
      <div className="flex w-[249px] items-center border-r-2 border-[#d2d2d2] pl-[12px] text-[24.500px] tracking-[0.1px] text-[#333]">
        {icon}
        <span className="ml-[13px]">{label}</span>
      </div>
    </div>
  );
}

function Viz() {
  return (
    <div className="flex w-[1796px] shrink-0 flex-col border-2 border-[#d2d2d2] bg-white">
      <div className="h-[100px] pt-[21px] pl-[19px] font-['Noto_Sans',sans-serif] text-[39px] leading-[56px] font-light tracking-[1.8px] text-[#333]">Case Fatality Rate</div>
      <svg className="h-[1138px] w-[1792px]" viewBox="754 424 1792 1138">
        {BUBBLES.map((b, i) => <circle key={i} cx={b.x} cy={b.y} r={b.r} fill={b.fill} />)}
        <g className="font-['Noto_Sans',sans-serif] text-[24.500px] font-light tracking-[0.8px]" textAnchor="middle">
          {LABELS.map(([t, x, y, dark]) => <text key={t} x={x} y={y} fill={dark ? '#000' : '#fff'}>{t}</text>)}
        </g>
      </svg>
    </div>
  );
}

function Legend() {
  return (
    <div className="flex h-[142px] w-[308px] shrink-0 flex-col border-2 border-[#d2d2d2] bg-white">
      <div className="h-[58px] bg-[#fafafa] pt-[11px] pl-[12px] text-[24.500px] tracking-[0.1px] whitespace-nowrap text-[#444]">SUM(Case Fatality Rate)</div>
      <div className="relative mt-[7px] ml-[7px] h-[32px] w-[288px] border-2 border-[#a9a193] bg-[linear-gradient(90deg,#a90b36_0%,#cc243a_12%,#ea4c48_22%,#f5735f_32%,#fdab99_46%,#e2d6d0_50%,#a8cfe6_54%,#92c0e1_59%,#5889b5_82%,#2d5b87_100%)]">
        <div className="absolute top-[25px] left-[142px] h-[8px] w-[2px] bg-black" />
      </div>
      <div className="mt-[4px] flex justify-between pr-[7px] pl-[8px] text-[24.500px] tracking-[0.5px] text-[#444]"><span>0.00</span><span>22.22</span></div>
    </div>
  );
}

/* ---------- bottom tabs and status ---------- */
const TABS = [
  ['Infection Risk Map', 'w-[240px] pl-[12px]'], ['Case Fatality Rate Map', 'w-[288px] pl-[10px] tracking-[-0.1px]'],
  ['Total Cases by Continent', 'w-[316px] pl-[10px] tracking-[-0.1px]'], ['AVG Infection Risk by Continent', 'w-[390px] pl-[10px]'],
  ['Case Fatality Rate', 'w-[238px] pl-[10px] font-bold bg-linear-to-b from-[#fdfdfd] to-[#f3f3f3] text-[#555] tracking-[0.35px]'],
  ['Total Cases and Total Deaths by ...', 'w-[400px] pl-[10px] tracking-[-0.15px]'], ['Case Fatality Rate by Continent', 'w-[386px] pl-[10px]'],
  ['Recovery Prop', 'w-[169px] pl-[10px] tracking-[0.1px]'],
];

function BottomTabs() {
  return (
    <div className={`flex h-[62px] shrink-0 border-t-2 border-b-2 border-[#cacaca] bg-linear-to-b from-[#e7e7e7] to-[#dfdfdf] text-[24.500px] text-[#666] ${UI}`}>
      <div className="flex w-[262px] shrink-0 items-center border-r-2 border-[#c8c8c8] pl-[19px] tracking-[0.1px]">
        <svg className="mr-[11px] h-[24px] w-[18px]" viewBox="0 0 18 24" fill="none" stroke="#666" strokeWidth="1.900"><ellipse cx="9" cy="5" rx="7.500" ry="4" /><path d="M1.500 5v13c0 6 15 6 15 0V5" /></svg>
        Data Source
      </div>
      {TABS.map(([t, c]) => (
        <div key={t} className={`flex shrink-0 items-center overflow-hidden border-r-2 border-[#c8c8c8] whitespace-nowrap ${c}`}>{t}</div>
      ))}
      <div className="flex w-[63px] items-center justify-center border-r-2 border-[#c8c8c8] pl-[2px]">
        <svg className="h-[30px] w-[30px]" viewBox="0 0 30 30" fill="none" stroke="#555" strokeWidth="2"><path d="M16 23H2V2h20v13M7 18v-4M12 18V8M17 18v-7" /><path d={plus(23, 23, 6)} strokeWidth="3.600" /></svg>
      </div>
      <div className="flex w-[64px] items-center justify-center border-r-2 border-[#c8c8c8] pl-[2px]">
        <svg className="h-[30px] w-[30px]" viewBox="0 0 30 30" fill="none" stroke="#555" strokeWidth="2"><path d="M13 23H2V2h20v12M2 12h20M12 2v21" /><path d={plus(23, 23, 6)} strokeWidth="3.600" /></svg>
      </div>
      <div className="flex w-[64px] items-center justify-center border-r-2 border-[#c8c8c8] pl-[2px]">
        <svg className="h-[30px] w-[30px]" viewBox="0 0 30 30" fill="none" stroke="#555" strokeWidth="2"><path d="m12 5-9-3v18l9 3zM12 5l10-3v13" /><path d={plus(23, 23, 6)} strokeWidth="3.600" /></svg>
      </div>
    </div>
  );
}

function StatusBar() {
  return (
    <div className={`flex h-[40px] shrink-0 items-center bg-linear-to-b from-[#e4e4e4] to-[#d1d1d1] text-[21.500px] text-black ${UI}`}>
      <div className="w-[133px] pl-[24px] tracking-[-0.1px] whitespace-nowrap">220 marks</div>
      <div className="ml-[24px] w-[175px] tracking-[-0.4px] whitespace-nowrap">1 row by 1 column</div>
      <div className="ml-[24px] w-[320px] tracking-[-0.3px] whitespace-nowrap">SUM(Case Fatality Rate): 349.45</div>
      <div className="ml-auto flex h-full">
        <div className="w-[254px] border-l-2 border-[#bdbdbd]" />
        <div className="w-[54px] border-l-2 border-[#bdbdbd]" />
        <div className="w-[54px] border-l-2 border-[#bdbdbd]" />
        <div className="w-[93px] border-l-2 border-[#bdbdbd]" />
        <div className="flex w-[142px] items-center border-l-2 border-[#bdbdbd] pl-[17px]">
          <svg className="h-[16px] w-[110px]" viewBox="0 0 110 16" fill="#555">
            <path d="M0 1h2v14H0zM12 1v14L4 8zM42 1v14l-8-7zM66 1v14l8-7zM95 1v14l8-7zM106 1h2v14h-2z" />
          </svg>
        </div>
        <div className="flex w-[155px] items-center gap-[20px] border-l-2 border-[#bdbdbd] pl-[18px]">
          <svg className="h-[22px] w-[22px]" viewBox="0 0 22 22" fill="#b3b3b3"><path d="M0 0h6v6H0zM8 0h6v6H8zM16 0h6v6h-6zM0 8h6v6H0zM8 8h6v6H8zM16 8h6v6h-6zM0 16h6v6H0zM8 16h6v6H8zM16 16h6v6h-6z" /></svg>
          <svg className="h-[22px] w-[22px]" viewBox="0 0 22 22" fill="#b3b3b3"><path d="M0 0h22v14H0zM0 16h6v6H0zM8 16h6v6H8zM16 16h6v6h-6z" /></svg>
          <div className="h-[22px] w-[22px] rounded-[1px] bg-[#666]" />
        </div>
      </div>
    </div>
  );
}

/* ---------- dock ---------- */
function Tile({ id, from, to, children }) {
  return (
    <svg className="h-[68px] w-[68px]" viewBox="0 0 68 68">
      <defs>
        <linearGradient id={`g-${id}`} x1="0" y1="0" x2="0" y2="1"><stop offset="0" stopColor={from} /><stop offset="1" stopColor={to} /></linearGradient>
        <clipPath id={`c-${id}`}><rect width="68" height="68" rx="16" /></clipPath>
      </defs>
      <g clipPath={`url(#c-${id})`}>
        <rect width="68" height="68" fill={`url(#g-${id})`} />
        {children}
      </g>
    </svg>
  );
}

function SlackMark({ x = 0, y = 0, s = 1 }) {
  return (
    <g transform={`translate(${x} ${y}) scale(${s})`}>
      <path d="M18 0a5 5 0 0 1 5 5v5h-5a5 5 0 0 1 0-10zM5 13h13a5 5 0 0 1 0 10H5a5 5 0 0 1 0-10z" fill="#5fc3ea" />
      <path d="M26 5a5 5 0 0 1 10 0v13a5 5 0 0 1-10 0zM38 18a5 5 0 1 1 5 5h-5z" fill="#56b280" />
      <path d="M0 31a5 5 0 0 1 5-5h5v5a5 5 0 0 1-10 0zM13 31a5 5 0 0 1 10 0v12a5 5 0 0 1-10 0z" fill="#cf375c" />
      <path d="M31 26h12a5 5 0 0 1 0 10H31a5 5 0 0 1 0-10zM26 38h5a5 5 0 1 1-5 5z" fill="#e5b549" />
    </g>
  );
}

function ticks(cx, cy, r0, r1, n) {
  return Array.from({ length: n }, (_, i) => {
    const a = (i / n) * Math.PI * 2;
    return `M${(cx + Math.cos(a) * r0).toFixed(1)} ${(cy + Math.sin(a) * r0).toFixed(1)}L${(cx + Math.cos(a) * r1).toFixed(1)} ${(cy + Math.sin(a) * r1).toFixed(1)}`;
  }).join('');
}

const ICONS = {
  finder: (
    <Tile id="finder" from="#5cc4fa" to="#2c68ee">
      <path d="M37 0c-5 12-8 26-8 39h9c0 10 1 19 4 29h26V0z" fill="#e3e9f2" />
      <path d="M18 20v5M50 20v5" stroke="#20303f" strokeWidth="3" strokeLinecap="round" />
      <path d="M14 46c10 10 30 10 40 0" fill="none" stroke="#1b2836" strokeWidth="2.600" strokeLinecap="round" />
    </Tile>
  ),
  siri: (
    <Tile id="siri" from="#4a1428" to="#17203c">
      <rect x="30" width="38" height="68" fill="#103c3c" opacity=".85" />
      <radialGradient id="sr"><stop offset="0" stopColor="#fff" /><stop offset=".3" stopColor="#d7e6f2" stopOpacity=".8" /><stop offset="1" stopColor="#5fb0bc" stopOpacity="0" /></radialGradient>
      <circle cx="34" cy="34" r="28.500" fill="#24405c" stroke="#7d93a0" strokeWidth="1.500" />
      <circle cx="34" cy="21" r="15" fill="#2f7a63" opacity=".65" />
      <path d="M7 32c8-16 21-8 27 3-8 16-24 16-27-3z" fill="#d0306c" opacity=".9" />
      <path d="M34 35c10-16 24-12 27-2-6 14-19 14-27 2z" fill="#54a3b5" opacity=".75" />
      <path d="M20 56c4-12 12-14 15-21 5 8 12 10 14 20-8 9-22 9-29 1z" fill="#4a5cc0" opacity=".8" />
      <circle cx="35" cy="34" r="19" fill="url(#sr)" />
    </Tile>
  ),
  launchpad: (
    <Tile id="launch" from="#b9b5c3" to="#a9a5b4">
      {['#7cdc4d', '#f2b932', '#ee8e34', '#d8382c', '#8f959b', '#ee4658', '#9a41d4', '#2f8cf5', '#5fc9a4'].map((c, i) => (
        <rect key={c} x={11 + (i % 3) * 17} y={11 + Math.floor(i / 3) * 17} width="12.500" height="12.500" rx="3" fill={c} />
      ))}
    </Tile>
  ),
  safari: (
    <Tile id="safari" from="#ffffff" to="#d6d6d8">
      <linearGradient id="sf" x1="0" y1="0" x2="0" y2="1"><stop offset="0" stopColor="#41b0f5" /><stop offset="1" stopColor="#2163e0" /></linearGradient>
      <circle cx="34" cy="34" r="29.500" fill="url(#sf)" />
      <path d={ticks(34, 34, 25, 28, 60)} stroke="#cfe4fb" strokeWidth=".8" />
      <path d="M54 17 38 38l-7-7z" fill="#e9493f" /><path d="M14 51l17-20 7 7z" fill="#f4f4f6" />
    </Tile>
  ),
  mail: (
    <Tile id="mail" from="#2f6af0" to="#5fc8fa">
      <rect x="10" y="19" width="48" height="30" rx="3" fill="#f2f2f4" />
      <path d="m11 47 17-14M57 47 40 33M11 21l19 17c3 3 5 3 8 0l19-17" fill="none" stroke="#a5a5ab" strokeWidth="1.600" />
    </Tile>
  ),
  contacts: (
    <Tile id="contacts" from="#b08a54" to="#a67e48">
      <rect x="65" width="3" height="14" fill="#ddd" /><rect x="65" y="14" width="3" height="16" fill="#4d9be0" /><rect x="65" y="36" width="3" height="14" fill="#e8893a" /><rect x="65" y="50" width="3" height="18" fill="#5cc85a" />
      <circle cx="35" cy="34" r="21" fill="none" stroke="#86683c" strokeWidth="1.300" />
      <circle cx="35" cy="29" r="7.500" fill="#8c6d40" /><path d="M20 48c4-10 26-10 30 0-8 9-22 9-30 0z" fill="#8c6d40" />
    </Tile>
  ),
  calendar: (
    <Tile id="cal" from="#ffffff" to="#f6f6f6">
      <rect width="68" height="21" fill="#e05a50" />
      <text x="34" y="16.500" textAnchor="middle" fill="#fff" className="font-['Inter'] text-[14px] font-semibold">APR</text>
      <text x="34" y="58" textAnchor="middle" fill="#333" className="font-['Inter'] text-[41px] font-light tracking-[-1px]">11</text>
    </Tile>
  ),
  notes: (
    <Tile id="notes" from="#fbfaf8" to="#e5e2da">
      <rect width="68" height="17" fill="#f8cd46" /><path d="M2 20.500h64" stroke="#b9b5aa" strokeWidth="1.500" strokeDasharray="1 1.500" /><path d="M0 34h68M0 51h68" stroke="#d0cdc5" strokeWidth="1.500" />
    </Tile>
  ),
  reminders: (
    <Tile id="rem" from="#ffffff" to="#f4f4f4">
      {[['#2f7cf6', 17], ['#ea4a3c', 34], ['#f09a37', 51]].map(([c, y]) => (
        <g key={c}><circle cx="14" cy={y} r="5.400" fill="none" stroke={c} strokeWidth="1.300" /><circle cx="14" cy={y} r="3.600" fill={c} /><path d={`M26 ${y}h35`} stroke="#c0c0c2" strokeWidth="1.500" /></g>
      ))}
    </Tile>
  ),
  maps: (
    <Tile id="maps" from="#74cf6d" to="#63c866">
      <path d="M0 0h16v68H0z" fill="#69cb68" /><path d="M0 24c8 2 14 10 16 44H0z" fill="#d57ec4" />
      <path d="M14-2h6v60h-6zM32-2h6v20l34 36v14L34 36zM42 0a26 26 0 0 0 26 26V18A18 18 0 0 1 50 0z" fill="#f4f4f6" />
      <path d="M18-2h16v50H18z" fill="#3478f6" /><path d="M34 68 48 50l20 18z" fill="#f7ce46" />
      <circle cx="26" cy="43" r="17" fill="#fff" /><circle cx="26" cy="43" r="15" fill="#3478f6" /><path d="m26 31 8 21-8-5-8 5z" fill="#fff" />
    </Tile>
  ),
  photos: (
    <Tile id="photos" from="#ffffff" to="#f7f7f7">
      {['#f09a37', '#e8d837', '#a9cb4f', '#6cb67a', '#6ba7dc', '#7d7cc4', '#b06ab4', '#ea4f45'].map((c, i) => (
        <rect key={c} x="25.500" y="4" width="17" height="27" rx="8.500" fill={c} opacity=".85" transform={`rotate(${i * 45} 34 34)`} />
      ))}
    </Tile>
  ),
  messages: (
    <Tile id="msg" from="#86ea80" to="#54c24a">
      <path d="M34 12c14 0 25 9 25 20.500S48 53 34 53c-3 0-5 0-8-1-2 3-5 4-8 4 2-2 3-4 3-6-7-4-12-10-12-17.500C9 21 20 12 34 12z" fill="#f4faf2" />
    </Tile>
  ),
  word: (
    <Tile id="word" from="#ffffff" to="#ffffff">
      <path d="M18 13a2 2 0 0 1 2-2h36v12H18z" fill="#5aa2e8" /><path d="M18 23h38v11H18z" fill="#4080d2" /><path d="M18 34h38v11H18z" fill="#2a5dbd" /><path d="M18 45h38v9a2 2 0 0 1-2 2H20a2 2 0 0 1-2-2z" fill="#1d4290" />
      <rect x="6" y="21" width="26" height="26" rx="2" fill="#2256b0" />
      <text x="19" y="40" textAnchor="middle" fill="#fff" className="font-['Inter'] text-[17px] font-bold">W</text>
    </Tile>
  ),
  pages: (
    <Tile id="pages" from="#f4b04a" to="#ef8a36">
      <path d="M52 12c4 1 4 4 3 6L20 54l-8 4 2-8L49 14z" fill="#f6f3ef" /><path d="m12 58 8-4-5-4z" fill="#7c7c7c" /><path d="M22 58h36" stroke="#fbd7a6" strokeWidth="2" />
    </Tile>
  ),
  numbers: (
    <Tile id="num" from="#92ee75" to="#5ecb42">
      <path d="M12 44h9v14h-9zM24 32h9v26h-9zM36 10h9v48h-9zM47 22h9v36h-9z" fill="#f7fbf4" />
    </Tile>
  ),
  keynote: (
    <Tile id="key" from="#57bdf8" to="#2a62e6">
      <path d="M17 10h34l3 18H14z" fill="#f7f9fb" /><path d="M14 28h40v2.500H14z" fill="#bcd0e4" /><path d="M34 31v26" stroke="#e8eef5" strokeWidth="3" /><path d="M23 56h22v3H23z" fill="#e8eef5" />
      <circle cx="34" cy="18" r="6" fill="#e94f4b" /><path d="M34 18v-6a6 6 0 0 1 6 6z" fill="#57a8ea" /><path d="M34 18h6a6 6 0 0 1-6 6z" fill="#5cc35c" /><path d="M34 18v6a6 6 0 0 1-6-6z" fill="#f2b53c" />
    </Tile>
  ),
  news: (
    <Tile id="news" from="#ffffff" to="#ffffff">
      <path d="M14 14h11l29 30v10H44L14 24zM38 14h16v17zM14 36v18h16z" fill="#ea4c5e" />
    </Tile>
  ),
  music: (
    <Tile id="music" from="#ec6778" to="#e63b42">
      <path d="M26 17 49 12v33" fill="none" stroke="#fff" strokeWidth="3.400" /><path d="M24.500 15 50.500 10.500V20L24.500 25z" fill="#fff" /><path d="M26 17v33" stroke="#fff" strokeWidth="3.200" /><ellipse cx="21" cy="51" rx="7" ry="5.500" fill="#fff" /><ellipse cx="44" cy="46" rx="7" ry="5.500" fill="#fff" />
    </Tile>
  ),
  podcasts: (
    <Tile id="pod" from="#bf6cf0" to="#7532b4">
      <g fill="none" stroke="#fff" strokeWidth="3"><path d="M22 52a23 23 0 1 1 24 0" /><path d="M24.500 42a14 14 0 1 1 19 0" /></g>
      <circle cx="34" cy="30" r="6" fill="#fff" /><path d="M28 44c0-6 12-6 12 0l-2 13c-1 4-7 4-8 0z" fill="#fff" />
    </Tile>
  ),
  tv: (
    <Tile id="tv" from="#2b3432" to="#0e1011">
      <FaApple x="6" y="20" size="25" color="#fff" />
      <text x="30" y="44" fill="#fff" className="font-['Inter'] text-[28px] font-medium">tv</text>
    </Tile>
  ),
  books: (
    <Tile id="books" from="#f3a03c" to="#ec7430">
      <path d="M33 20c-4-6-18-6-22-1v31c6-3 16-3 22 1zM35 20c4-6 18-6 22-1v31c-6-3-16-3-22 1z" fill="#f8f6f2" />
    </Tile>
  ),
  store: (
    <Tile id="store" from="#4cb8f2" to="#2559d8">
      <g stroke="#fff" strokeWidth="5" strokeLinecap="round"><path d="m37 15-17 31M31 15l21 38M12 42h24M47 42h9M18 50l-2 3" /></g>
    </Tile>
  ),
  settings: (
    <Tile id="set" from="#d3dde6" to="#8d8d8b">
      <circle cx="34" cy="34" r="28" fill="#5b5d5e" stroke="#333" strokeWidth="2" /><path d={ticks(34, 34, 22.5, 25.5, 56)} stroke="#222" strokeWidth="1.500" />
      <circle cx="34" cy="34" r="19" fill="#8b8d8e" stroke="#2b2b2b" strokeWidth="3" /><circle cx="34" cy="34" r="6.500" fill="#454647" stroke="#2b2b2b" />
      <path d="M34 34h17M34 34l-9-15M34 34l-9 15" stroke="#2b2b2b" strokeWidth="4" /><path d="M34 34h17M34 34l-9-15M34 34l-9 15" stroke="#9b9d9e" strokeWidth="1.500" />
    </Tile>
  ),
  chrome: (
    <Tile id="chrome" from="#ffffff" to="#f0f0f0">
      <circle cx="34" cy="34" r="28" fill="#4da266" />
      <path d="M34 6a28 28 0 0 1 24.200 14H34a14 14 0 0 0-12.100 7L9.800 20A28 28 0 0 1 34 6z" fill="#cf4f43" />
      <path d="M58.200 20A28 28 0 0 1 34 62l12-21a14 14 0 0 0 0-14l-3-7z" fill="#f7cf55" />
      <circle cx="34" cy="34" r="13.500" fill="#f3f3f3" /><circle cx="34" cy="34" r="10.800" fill="#5286ec" />
    </Tile>
  ),
  terminal: (
    <Tile id="term" from="#c4d2de" to="#6a6a6c">
      <rect x="2" y="2" width="64" height="63" rx="14" fill="#050505" /><rect x="7" y="8" width="54" height="52" rx="6" fill="#262628" />
      <path d="m12 14 7 4-7 5M23 25h10" fill="none" stroke="#fff" strokeWidth="2.200" />
    </Tile>
  ),
  slack: (
    <Tile id="slack" from="#ffffff" to="#ffffff"><SlackMark x={10} y={10} /></Tile>
  ),
  tableau: (
    <svg className="-mx-[2px] -my-[2px] h-[72px] w-[72px]" viewBox="0 0 72 72" fill="none" stroke="#427bac">
      <rect width="72" height="72" fill="#f4f5f7" stroke="none" />
      <path d={plus(36, 36, 12)} strokeWidth="4.600" />
      <path d={plus(20.5, 21, 9) + plus(51.5, 21, 9) + plus(20.5, 51, 9) + plus(51.5, 51, 9)} strokeWidth="3" />
      <path d={plus(36, 11.5, 6) + plus(36, 60, 6) + plus(12, 36, 6) + plus(60, 36, 6)} strokeWidth="2.200" />
    </svg>
  ),
};

const DOCK = [
  ['finder', 'ml-[14px]', true], ['siri', 'ml-[20px]'], ['launchpad', 'ml-[20px]'], ['safari', 'ml-[22px]', true],
  ['mail', 'ml-[20px]', true], ['contacts', 'ml-[20px]'], ['calendar', 'ml-[20px]'], ['notes', 'ml-[20px]', true],
  ['reminders', 'ml-[20px]'], ['maps', 'ml-[20px]'], ['photos', 'ml-[20px]'], ['messages', 'ml-[22px]'],
  ['word', 'ml-[20px]', true], ['pages', 'ml-[20px]'], ['numbers', 'ml-[20px]'], ['keynote', 'ml-[20px]'],
  ['news', 'ml-[20px]'], ['music', 'ml-[20px]'], ['podcasts', 'ml-[22px]'], ['tv', 'ml-[20px]', true],
  ['books', 'ml-[20px]'], ['store', 'ml-[20px]'], ['settings', 'ml-[20px]'], ['|', 'ml-[30px]'],
  ['chrome', 'ml-[28px]', true], ['terminal', 'ml-[20px]', true], ['slack', 'ml-[20px]', true], ['tableau', 'ml-[20px]', true],
  ['|', 'ml-[32px]'],
];

function Dock() {
  return (
    <div className="mt-[6px] ml-[70px] flex h-[106px] w-[2740px] shrink-0 rounded-[30px] border-2 border-white/20 bg-[linear-gradient(90deg,#1e1432_0%,#1e1432_28%,#25164b_45%,#251548_58%,#4a1868_68%,#4a1868_74%,#2e164f_88%,#241546_100%)]">
      {DOCK.map(([k, c, dot], i) =>
        k === '|' ? (
          <div key={i} className={`mt-[12px] h-[78px] w-[2px] shrink-0 bg-white/30 ${c}`} />
        ) : (
          <div key={k} className={`relative flex w-[68px] shrink-0 flex-col items-center pt-[14px] ${c}`}>
            {ICONS[k]}
            {dot && <div className="mt-[10px] h-[8px] w-[8px] rounded-full bg-[#b49fd2]" />}
            {k === 'mail' && (
              <div className={`absolute top-[6px] -right-[10px] flex h-[32px] w-[32px] items-center justify-center rounded-full bg-[#e0493f] text-[20px] text-white ${SYS}`}>1</div>
            )}
          </div>
        )
      )}
      <svg className="mt-[14px] ml-[28px] h-[74px] w-[64px]" viewBox="0 0 64 74">
        <path d="M0 6h62v46H0z" fill="#8e8b94" />
        <path d="M3 1h40l15 20v52H3z" fill="#f4f4f4" /><path d="M42 1v18l17 4z" fill="#cfcfcf" />
        <path d="M13 5v60M23 5v60M33 5v60M43 24v41M52 26v39" stroke="#cccccc" strokeWidth="4" strokeDasharray="1.500 1.500" />
        <rect x="20" y="60" width="22" height="11" fill="#f4f4f4" />
        <text x="31" y="69" textAnchor="middle" fill="#666" className="font-['Inter'] text-[8.500px] tracking-[0.6px]">CSV</text>
      </svg>
      <svg className="mt-[10px] ml-[21px] h-[80px] w-[76px]" viewBox="0 0 76 80">
        <rect x="1" width="71" height="79" fill="#1b1f25" /><rect x="1" width="20" height="79" fill="#221b25" />
        <rect x="22" y="2" width="38" height="3" fill="#4c4f55" /><rect x="1" y="43" width="20" height="3" fill="#2d6fa8" />
        {Array.from({ length: 13 }, (_, i) => <rect key={i} x="26" y={10 + i * 4.5} width={16 + ((i * 7) % 22)} height="1.300" fill={i === 7 ? '#3d6c86' : '#70747b'} />)}
        {Array.from({ length: 14 }, (_, i) => <rect key={i} x="4" y={10 + i * 4.5} width={8 + ((i * 5) % 8)} height="1.200" fill="#6a6470" />)}
        <rect x="48" y="52" width="26" height="25" rx="6" fill="#fff" /><SlackMark x={52} y={55.5} s={0.37} />
      </svg>
      <svg className="mt-[8px] ml-[14px] h-[80px] w-[66px]" viewBox="0 0 66 82">
        <linearGradient id="tr" x1="0" x2="1" y1="0" y2="0"><stop offset="0" stopColor="#6d7078" /><stop offset=".4" stopColor="#a7a9ae" /><stop offset=".7" stopColor="#75777d" /><stop offset="1" stopColor="#4c4e55" /></linearGradient>
        <path d="M5 14h56l-7 58c-1 8-41 8-42 0z" fill="url(#tr)" opacity=".9" />
        <ellipse cx="33" cy="14" rx="29" ry="7" fill="#8d8f94" stroke="#b8babe" strokeWidth="1.500" />
        <path d="m9 13 7-9 5 5 6-8 6 6 6-5 4 6 6-3 4 8-5 5-10-2-7 4-9-4-8 3z" fill="#eceded" />
        <path d="m18 12 5-5 3 6zM38 11l6-4 2 7zM29 9l3 7-5 1z" fill="#9a8b84" />
      </svg>
    </div>
  );
}

export default function App() {
  return (
    <div className="flex h-[1800px] w-[2880px] flex-col overflow-hidden bg-[linear-gradient(90deg,#0b0224_0%,#040012_28%,#0b0330_50%,#3d0f55_66%,#3f1060_74%,#1c0740_86%,#0c0128_100%)]">
      <MenuBar />
      <div className="flex h-[1628px] shrink-0 flex-col overflow-hidden rounded-[20px] bg-[#f4f4f4]">
        <div className="flex h-[58px] shrink-0 items-center border-b-2 border-[#cfcdd1] bg-[#efedf2] px-[16px]">
          <div className="flex gap-[16px]">
            <div className="h-[24px] w-[24px] rounded-full border border-[#d8574b] bg-[#ec6a5e]" />
            <div className="h-[24px] w-[24px] rounded-full border border-[#dba63c] bg-[#f4bf4f]" />
            <div className="h-[24px] w-[24px] rounded-full border border-[#4fae43] bg-[#61c554]" />
          </div>
          <div className={`mr-[104px] mb-[3px] flex-1 text-center text-[26px] font-bold tracking-[0.15px] text-[#4b494d] ${SYS}`}>Tableau Public - Book1</div>
        </div>
        <Toolbar />
        <div className="flex h-[1390px] shrink-0">
          <DataPane />
          <Cards />
          <div className={`ml-[12px] flex w-[2116px] shrink-0 flex-col ${UI}`}>
            <Shelf label="Columns" icon={<svg className="h-[24px] w-[24px]" viewBox="0 0 24 24" fill="#666"><path d="M2 0h4v4H2zM2 6h4v18H2zM10 0h4v4h-4zM10 6h4v18h-4zM18 0h4v4h-4zM18 6h4v18h-4z" /></svg>} />
            <div className="h-[12px]" />
            <Shelf label="Rows" icon={<svg className="h-[20px] w-[24px]" viewBox="0 0 24 20" fill="#666"><path d="M0 0h4v4H0zM6 0h18v4H6zM0 8h4v4H0zM6 8h18v4H6zM0 16h4v4H0zM6 16h18v4H6z" /></svg>} />
            <div className="mt-[12px] flex h-[1242px] justify-between">
              <Viz />
              <Legend />
            </div>
          </div>
        </div>
        <BottomTabs />
        <StatusBar />
      </div>
      <Dock />
    </div>
  );
}
